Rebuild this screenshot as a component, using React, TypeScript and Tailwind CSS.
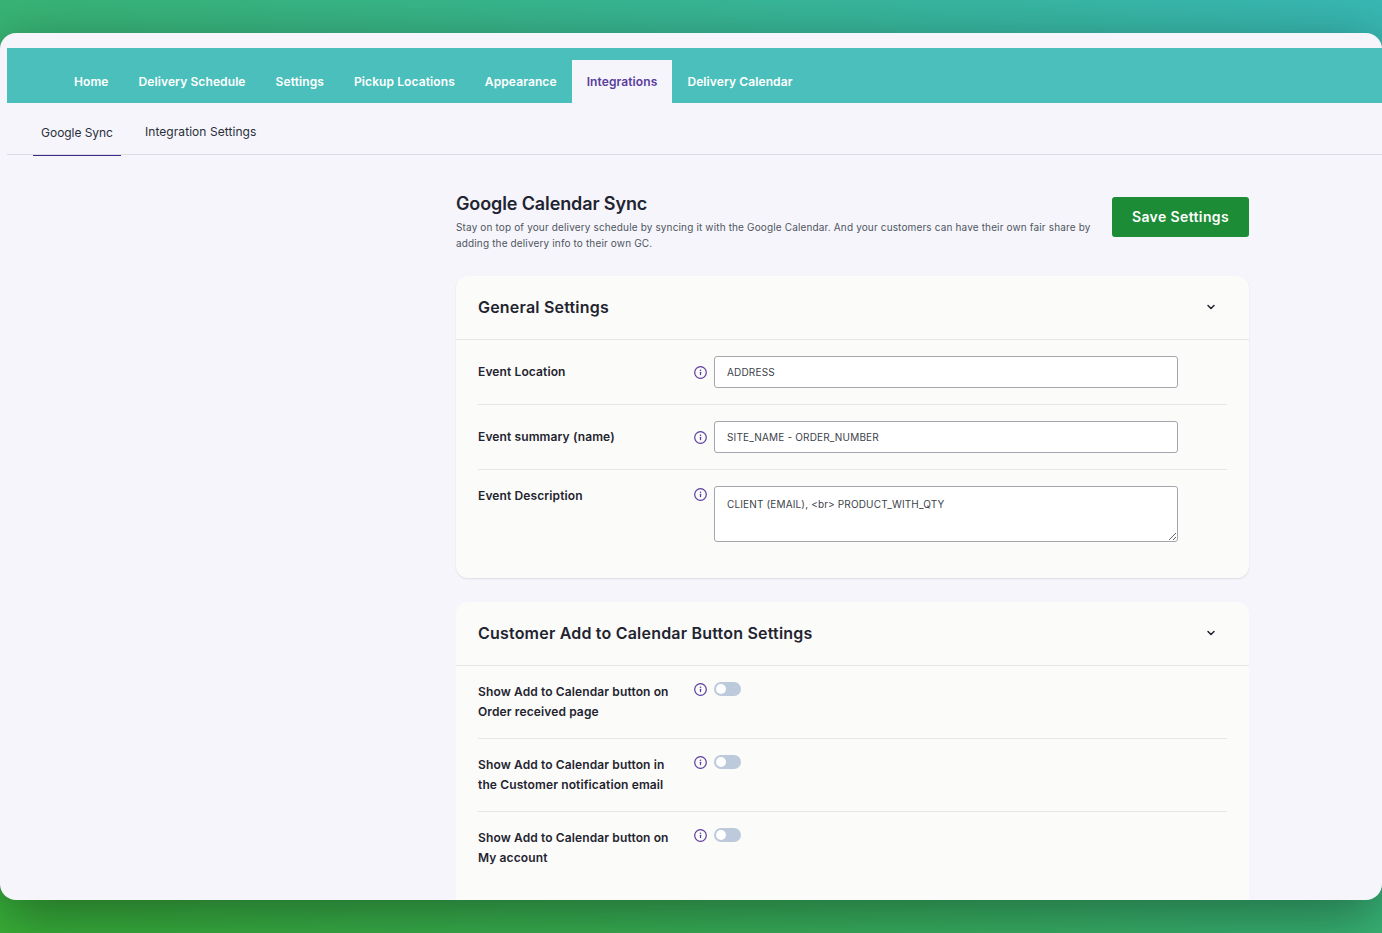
import { ChevronDown } from 'lucide-react';

const navItems = ['Home', 'Delivery Schedule', 'Settings', 'Pickup Locations', 'Appearance', 'Integrations', 'Delivery Calendar'];

function InfoIcon() {
  return (
    <svg width="13" height="13" viewBox="0 0 13 13" fill="none" className="shrink-0 text-[#5b3d9e]">
      <circle cx="6.5" cy="6.5" r="5.8" stroke="currentColor" strokeWidth="1.2" />
      <circle cx="6.5" cy="4.2" r="0.8" fill="currentColor" />
      <rect x="5.9" y="5.8" width="1.2" height="3.4" rx="0.4" fill="currentColor" />
    </svg>
  );
}

function Toggle() {
  return (
    <div className="w-[27px] h-[14px] rounded-full bg-[#bccadb] p-[2px] mt-[-1px]">
      <div className="w-[10px] h-[10px] rounded-full bg-white" />
    </div>
  );
}

function ToggleRow({ line1, line2, last }: { line1: string; line2: string; last?: boolean }) {
  return (
    <div className={`flex h-[73px] pt-[16px] ${last ? '' : 'border-b border-[#e6e6e6]'}`}>
      <div className="w-[216px] text-[12px] leading-[20px] font-semibold tracking-[0.12px] text-[#1f2430]">
        {line1}
        <br />
        {line2}
      </div>
      <div className="flex items-start gap-[7px] pt-[1px]">
        <InfoIcon />
        <Toggle />
      </div>
    </div>
  );
}

function CardHeader({ title }: { title: string }) {
  return (
    <div className="h-[64px] flex items-center justify-between pl-[22px] pr-[32px] pb-[2px] border-b border-[#e6e6e6]">
      <h2 className="text-[16px] font-semibold tracking-[0.2px] text-[#1f2430]">{title}</h2>
      <ChevronDown className="w-[12px] h-[12px] text-[#1f2430]" strokeWidth={3} />
    </div>
  );
}

export default function App() {
  return (
    <div className="h-[933px] overflow-hidden bg-[linear-gradient(to_top_right,#38b038,#38b8b4)] py-[33px] font-['Inter',sans-serif]">
      <div className="h-[867px] rounded-[16px] bg-[#f5f5fb] overflow-hidden pt-[15px] pl-[7px] shadow-[0_16px_60px_rgba(0,0,0,0.4)]">
        <nav className="h-[55px] bg-[#4bbfbc] flex items-end pl-[52px]">
          {navItems.map((item) => (
            <a
              key={item}
              className={`h-[43px] flex items-center px-[15px] text-[12px] font-semibold tracking-[0.1px] ${
                item === 'Integrations' ? 'bg-[#f5f5fb] text-[#5b3d9e]' : 'text-white'
              }`}
            >
              {item}
            </a>
          ))}
        </nav>
        <div className="h-[52px] flex items-stretch border-b border-[#dcdce4] pl-[26px]">
          <div className="w-[88px] flex items-center justify-center pt-[7px] text-[12px] tracking-[-0.05px] text-[#2a2f3a] border-b border-[#3c2a8c] mb-[-2px]">
            Google Sync
          </div>
          <div className="flex items-center pl-[24px] pt-[7px] text-[12px] tracking-[0.06px] text-[#2a2f3a]">Integration Settings</div>
        </div>
        <main className="ml-[449px] w-[793px] pt-[38px]">
          <div className="flex items-start justify-between">
            <div className="w-[640px]">
              <h1 className="text-[18px] leading-[22px] font-semibold tracking-[-0.12px] text-[#1f2430]">Google Calendar Sync</h1>
              <p className="mt-[4px] text-[10px] leading-[16px] tracking-[0.145px] text-[#50555f]">
                Stay on top of your delivery schedule by syncing it with the Google Calendar. And your customers can have their own fair share by adding the delivery info to their own GC.
              </p>
            </div>
            <button className="mt-[4px] w-[137px] h-[40px] pb-[1px] rounded-[3px] bg-[#1c8c36] text-white text-[14px] font-semibold tracking-[0.38px]">
              Save Settings
            </button>
          </div>
          <section className="mt-[25px] h-[302px] rounded-[12px] bg-[#fbfbf9] shadow-[0_1px_2px_rgba(0,0,0,0.1)]">
            <CardHeader title="General Settings" />
            <div className="px-[22px]">
              <div className="flex items-center h-[65px] border-b border-[#e6e6e6]">
                <div className="w-[216px] text-[12px] font-semibold tracking-[0.12px] text-[#1f2430]">Event Location</div>
                <div className="flex items-center gap-[7px]">
                  <InfoIcon />
                  <input readOnly value="ADDRESS" className="w-[464px] h-[32px] px-[12px] rounded-[3px] border border-[#a3a6ab] bg-white text-[10px] tracking-[0.17px] text-[#3c434a]" />
                </div>
              </div>
              <div className="flex items-center h-[65px] border-b border-[#e6e6e6]">
                <div className="w-[216px] text-[12px] font-semibold tracking-[0.12px] text-[#1f2430]">Event summary (name)</div>
                <div className="flex items-center gap-[7px]">
                  <InfoIcon />
                  <input readOnly value="SITE_NAME - ORDER_NUMBER" className="w-[464px] h-[32px] px-[12px] rounded-[3px] border border-[#a3a6ab] bg-white text-[10px] tracking-[0.17px] text-[#3c434a]" />
                </div>
              </div>
              <div className="flex items-start pt-[16px]">
                <div className="w-[216px] text-[12px] leading-[20px] font-semibold tracking-[0.12px] text-[#1f2430]">Event Description</div>
                <div className="flex items-start gap-[7px]">
                  <div className="pt-[2px]">
                    <InfoIcon />
                  </div>
                  <textarea readOnly value="CLIENT (EMAIL), <br> PRODUCT_WITH_QTY" className="w-[464px] h-[56px] px-[12px] py-[9px] rounded-[3px] border border-[#a3a6ab] bg-white text-[10px] leading-[16px] tracking-[0.15px] text-[#3c434a]" />
                </div>
              </div>
            </div>
          </section>
          <section className="mt-[24px] rounded-[12px] bg-[#fbfbf9] h-[320px]">
            <CardHeader title="Customer Add to Calendar Button Settings" />
            <div className="px-[22px]">
              <ToggleRow line1="Show Add to Calendar button on" line2="Order received page" />
              <ToggleRow line1="Show Add to Calendar button in" line2="the Customer notification email" />
              <ToggleRow line1="Show Add to Calendar button on" line2="My account" last />
            </div>
          </section>
        </main>
      </div>
    </div>
  );
}
